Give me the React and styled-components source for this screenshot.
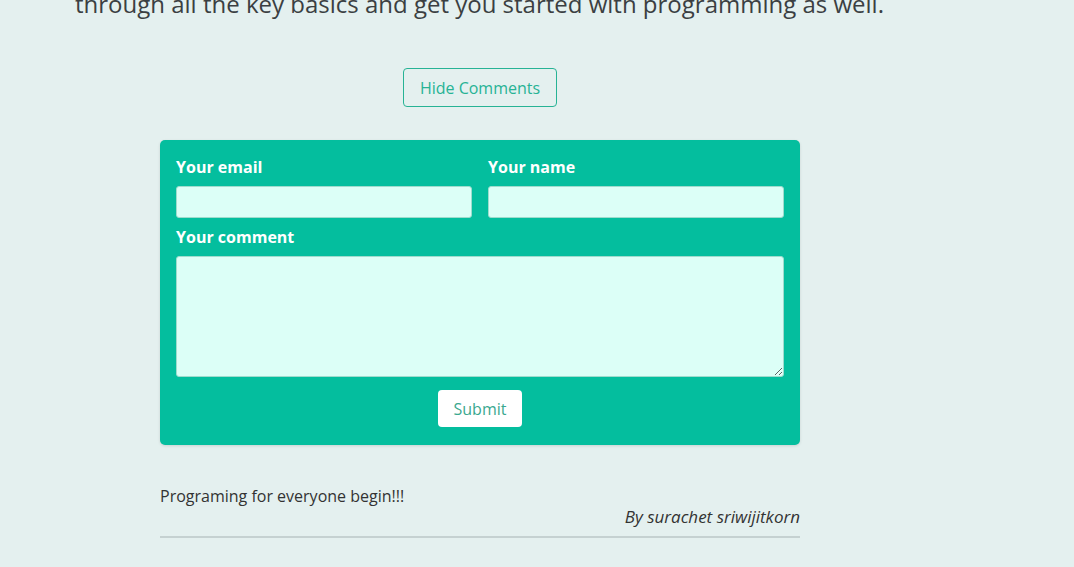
import React from "react";
import styled, { createGlobalStyle } from "styled-components";

const Global = createGlobalStyle`
  html, body { margin: 0; padding: 0; background: #e4f0ef; }
  body { font-family: "Open Sans", "Noto Sans", sans-serif; color: #333; overflow: hidden; }
  * { box-sizing: border-box; }
`;

const Page = styled.div`
  width: 1074px;
  height: 567px;
  overflow: hidden;
  background: #e4f0ef;
`;

const Intro = styled.p`
  margin: -14px 0 0 75px;
  font-size: 24px;
  line-height: 36px;
  color: #3b3f42;
  white-space: nowrap;
`;

const Column = styled.div`
  width: 640px;
  margin: 0 0 0 160px;
  display: flex;
  flex-direction: column;
  align-items: stretch;
`;

const ToggleRow = styled.div`
  display: flex;
  justify-content: center;
  margin-top: 46px;
`;

const OutlineButton = styled.button`
  font-family: inherit;
  font-size: 16px;
  color: #27b395;
  background: transparent;
  border: 1px solid #27b395;
  border-radius: 4px;
  height: 39px;
  padding: 0 16px;
  cursor: pointer;
`;

const Card = styled.form`
  margin-top: 33px;
  background: #04be9e;
  border-radius: 5px;
  padding: 16px 16px 18px;
  display: grid;
  grid-template-columns: 1fr 1fr;
  column-gap: 16px;
  box-shadow: 0 1px 3px rgba(0, 0, 0, 0.12);
`;

const Field = styled.div`
  display: flex;
  flex-direction: column;
  grid-column: ${(p) => (p.$wide ? "1 / span 2" : "auto")};
  margin-top: ${(p) => (p.$first ? "0" : "8px")};
`;

const Label = styled.label`
  font-weight: 700;
  font-size: 16px;
  line-height: 22px;
  color: #ffffff;
  margin-bottom: 8px;
`;

const Input = styled.input`
  height: 32px;
  background: #dcfff7;
  border: 1px solid #9fdccd;
  border-radius: 3px;
  font-family: inherit;
  font-size: 14px;
  outline: none;
`;

const TextArea = styled.textarea`
  height: 121px;
  background: #dcfff7;
  border: 1px solid #9fdccd;
  border-radius: 3px;
  font-family: inherit;
  font-size: 14px;
  outline: none;
  resize: vertical;
  display: block;
`;

const SubmitRow = styled.div`
  grid-column: 1 / span 2;
  display: flex;
  justify-content: center;
  margin-top: 13px;
`;

const SubmitButton = styled.button`
  font-family: inherit;
  font-size: 16px;
  color: #3aa88f;
  background: #ffffff;
  border: none;
  border-radius: 4px;
  height: 37px;
  padding: 0 16px;
  cursor: pointer;
`;

const Comment = styled.div`
  margin-top: 39px;
  padding-bottom: 7px;
  border-bottom: 2px solid #c5d1d1;
`;

const CommentText = styled.p`
  margin: 0;
  font-size: 16px;
  line-height: 24px;
  color: #333;
`;

const Author = styled.p`
  margin: -3px 0 0;
  font-size: 17px;
  line-height: 24px;
  font-style: italic;
  text-align: right;
  color: #333;
`;

export default function App() {
  return (
    <Page>
      <Global />
      <Intro>through all the key basics and get you started with programming as well.</Intro>
      <Column>
        <ToggleRow>
          <OutlineButton type="button">Hide Comments</OutlineButton>
        </ToggleRow>
        <Card onSubmit={(e) => e.preventDefault()}>
          <Field $first>
            <Label>Your email</Label>
            <Input type="email" />
          </Field>
          <Field $first>
            <Label>Your name</Label>
            <Input type="text" />
          </Field>
          <Field $wide>
            <Label>Your comment</Label>
            <TextArea />
          </Field>
          <SubmitRow>
            <SubmitButton type="submit">Submit</SubmitButton>
          </SubmitRow>
        </Card>
        <Comment>
          <CommentText>Programing for everyone begin!!!</CommentText>
          <Author>By surachet sriwijitkorn</Author>
        </Comment>
      </Column>
    </Page>
  );
}
